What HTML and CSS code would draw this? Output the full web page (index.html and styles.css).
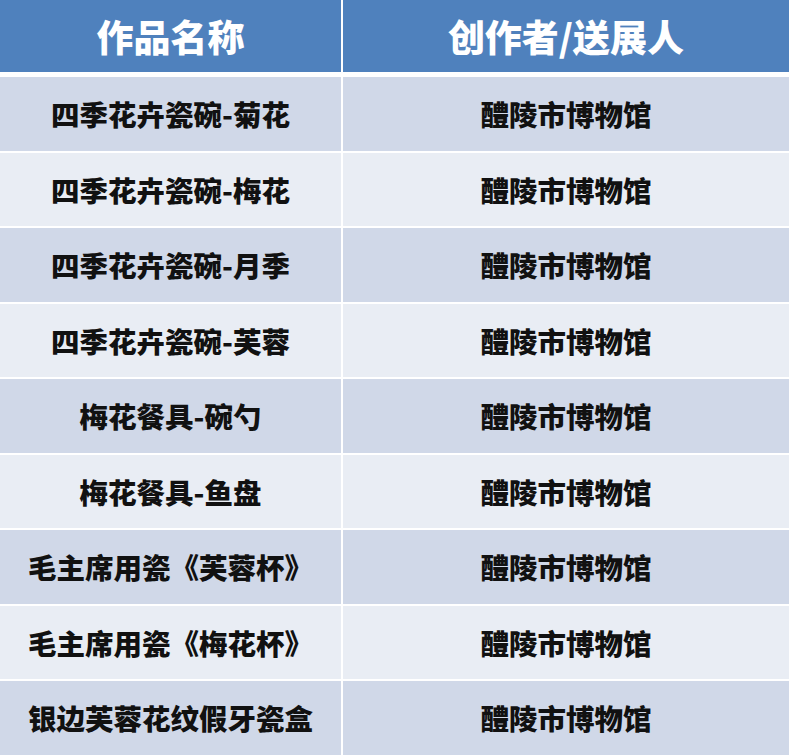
FILE: index.html
```html
<!DOCTYPE html>
<html lang="zh">
<head>
<meta charset="utf-8">
<link rel="stylesheet" href="styles.css">
</head>
<body>
<div class="table">
  <div class="cell head">作品名称</div>
  <div class="cell head">创作者/送展人</div>
  <div class="cell odd">四季花卉瓷碗-菊花</div>
  <div class="cell odd">醴陵市博物馆</div>
  <div class="cell even">四季花卉瓷碗-梅花</div>
  <div class="cell even">醴陵市博物馆</div>
  <div class="cell odd">四季花卉瓷碗-月季</div>
  <div class="cell odd">醴陵市博物馆</div>
  <div class="cell even">四季花卉瓷碗-芙蓉</div>
  <div class="cell even">醴陵市博物馆</div>
  <div class="cell odd">梅花餐具-碗勺</div>
  <div class="cell odd">醴陵市博物馆</div>
  <div class="cell even">梅花餐具-鱼盘</div>
  <div class="cell even">醴陵市博物馆</div>
  <div class="cell odd">毛主席用瓷《芙蓉杯》</div>
  <div class="cell odd">醴陵市博物馆</div>
  <div class="cell even">毛主席用瓷《梅花杯》</div>
  <div class="cell even">醴陵市博物馆</div>
  <div class="cell odd">银边芙蓉花纹假牙瓷盒</div>
  <div class="cell odd">醴陵市博物馆</div>
</div>
</body>
</html>
```

FILE: styles.css
```css
html, body {
  margin: 0;
  padding: 0;
  background: #ffffff;
}
body {
  width: 792px;
  height: 755px;
  overflow: hidden;
}
.table {
  width: 790px;
  display: grid;
  grid-template-columns: 341px 446px;
  grid-template-rows: 75px repeat(9, 73.5px);
  column-gap: 2px;
  row-gap: 2px;
}
.cell {
  display: flex;
  align-items: center;
  justify-content: center;
  font-family: "Noto Sans CJK SC", "Noto Sans", sans-serif;
  font-weight: 900;
  font-size: 28.5px;
  color: #111111;
  white-space: nowrap;
}
.head {
  background: #4f81bd;
  color: #ffffff;
  font-size: 37px;
  margin-bottom: 3px;
}
.odd {
  background: #d0d8e8;
}
.even {
  background: #e9edf4;
}
```
